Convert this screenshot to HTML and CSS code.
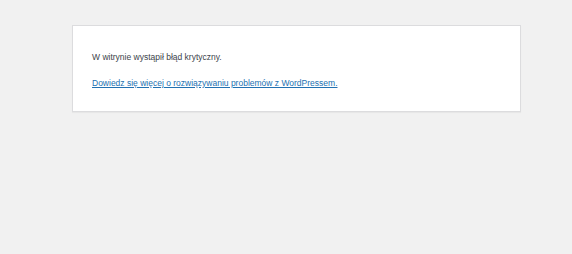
FILE: index.html
```html
<!DOCTYPE html>
<html lang="pl">
<head>
<meta charset="utf-8">
<title>WordPress › Błąd</title>
<link rel="stylesheet" href="styles.css">
</head>
<body class="error-page">
<div class="wp-die-message">
<p>W witrynie wystąpił błąd krytyczny.</p>
<p><a href="#">Dowiedz się więcej o rozwiązywaniu problemów z WordPressem.</a></p>
</div>
</body>
</html>
```

FILE: styles.css
```css
html {
	background: #f1f1f1;
}
body {
	background: #fff;
	border: 1px solid #dcdcde;
	color: #3c434a;
	font-family: "Liberation Sans", Arial, sans-serif;
	width: 409px;
	margin: 25px 0 0 72px;
	padding: 25px 19px 8px;
	box-shadow: 0 1px 1px rgba(0,0,0,.04);
}
.wp-die-message p {
	font-size: 8.5px;
	line-height: 1.5;
	margin: 0 0 13px;
}
a {
	color: #2271b1;
}
```
